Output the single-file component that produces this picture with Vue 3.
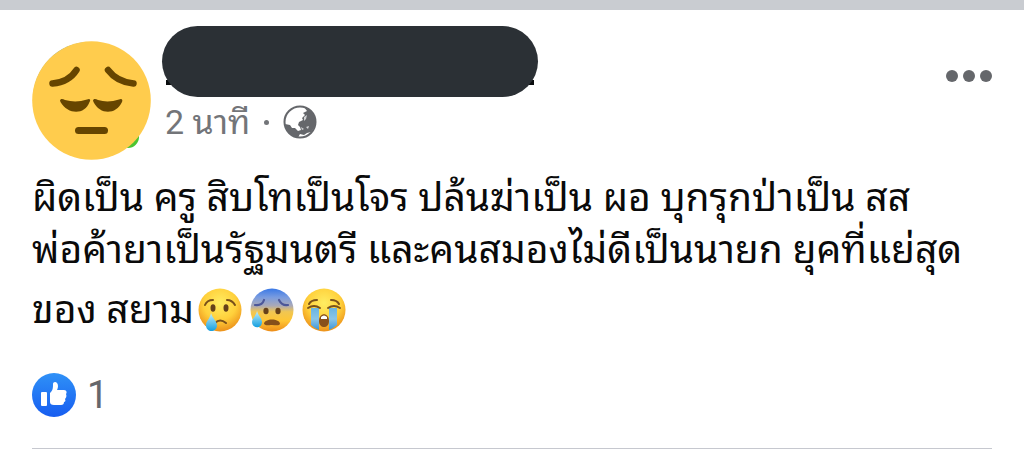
<script setup>
import { ref } from 'vue'

const lines = [
  'ผิดเป็น ครู สิบโทเป็นโจร ปล้นฆ่าเป็น ผอ บุกรุกป่าเป็น สส',
  'พ่อค้ายาเป็นรัฐมนตรี และคนสมองไม่ดีเป็นนายก ยุคที่แย่สุด',
]
const likes = ref(1)
</script>

<template>
  <article class="post">
    <header class="head">
      <svg class="avatar" viewBox="0 0 120 120" role="img" aria-label="Profile picture">
        <circle cx="58" cy="59" r="57" fill="#4f9dc4" />
        <circle cx="96" cy="97" r="11" fill="#4cc431" />
        <circle cx="59.500" cy="60.500" r="59.300" fill="#ffcc4d" />
        <g fill="none" stroke="#664500" stroke-width="6.500" stroke-linecap="round">
          <path d="M20.500 43.500Q37 42 44.500 30" />
          <path d="M76 30Q85 42 101.500 43.500" />
        </g>
        <path d="M28 60.500C29 58 31 59 33 60Q44 63 55 59.500C58 58 59 60 57.500 62C53 75 36 75 28.500 62Z" fill="#664500" />
        <path d="M61 60.500C62 58 64 59 66 60Q76 63 87 59.500C90 58 91 60 90 62C84 75 68 75 61.500 62Z" fill="#664500" />
        <rect x="43" y="87" width="33" height="7" rx="3.500" fill="#664500" />
      </svg>
      <div class="who">
        <div class="name"></div>
        <div class="meta">
          <span>2 นาที</span>
          <span class="dot"></span>
          <svg class="globe" viewBox="0 0 34 34" role="img" aria-label="Public">
            <circle cx="17" cy="17" r="15.500" fill="#fff" stroke="#65676b" stroke-width="2" />
            <path d="M21 2L24 6L20 8L22 10L19 13L20 15L16 17L15 20L17 22L18 25L15 26L12 23L9 23L7 20L2 19C3 27 9 32 15 32.500L17 29L21 30L24 28L28 27C36 19 33 5 21 2Z" fill="#65676b" />
            <path d="M21 12L24 10L23 14L21 16ZM23 22L26 21L25 24ZM18 22L21 24L19 25Z" fill="#d4d5d7" />
          </svg>
        </div>
      </div>
      <button class="more" type="button" aria-label="More options"><i></i><i></i><i></i></button>
    </header>

    <div class="body">
      <p v-for="line in lines" :key="line">{{ line }}</p>
      <p class="last">
        <span>ของ สยาม</span>
        <svg class="emoji" viewBox="0 0 44 44" role="img" aria-label="Crying face">
          <defs>
            <radialGradient id="skin" cx=".5" cy=".34" r=".7">
              <stop offset="0" stop-color="#ffed62" />
              <stop offset=".55" stop-color="#ffd03b" />
              <stop offset="1" stop-color="#e98816" />
            </radialGradient>
            <linearGradient id="tear" x2="0" y2="1">
              <stop offset="0" stop-color="#c3effa" />
              <stop offset="1" stop-color="#149fe0" />
            </linearGradient>
          </defs>
          <circle cx="22" cy="22" r="21.500" fill="url(#skin)" />
          <g fill="none" stroke="#79501a" stroke-width="2" stroke-linecap="round">
            <path d="M7 17Q9 12 15 12M29 12Q34 12 37 17" />
            <path d="M17 35Q22 30 28 35" />
          </g>
          <ellipse cx="15" cy="20" rx="2.500" ry="3.700" fill="#65411a" />
          <ellipse cx="28" cy="20" rx="2.500" ry="3.700" fill="#65411a" />
          <path d="M13 25C12 31 8 33 8 37C8 45 19 45 19 37C18 32 15 31 13 25Z" fill="url(#tear)" />
        </svg>
        <svg class="emoji" viewBox="0 0 44 44" role="img" aria-label="Anxious face with sweat">
          <defs>
            <linearGradient id="cold" x2="0" y2="1">
              <stop offset="0" stop-color="#3978e6" />
              <stop offset=".2" stop-color="#789be0" />
              <stop offset=".4" stop-color="#aaa9b7" />
              <stop offset=".54" stop-color="#f0c653" />
              <stop offset=".75" stop-color="#ffc634" />
              <stop offset="1" stop-color="#ed8c18" />
            </linearGradient>
          </defs>
          <circle cx="22" cy="22" r="21.500" fill="url(#cold)" />
          <path d="M5 17Q12 18 14 12M29 12Q32 18 38 17" fill="none" stroke="#4b5799" stroke-width="2.200" stroke-linecap="round" />
          <ellipse cx="16" cy="23" rx="2.600" ry="3.300" fill="#65411a" />
          <ellipse cx="28" cy="23" rx="2.600" ry="3.300" fill="#65411a" />
          <path d="M14 36C14 30 30 30 30 36C29 38 26 37 22 37S16 38 14 36Z" fill="#85501a" />
          <path d="M7 23C6 28 2 30 2 34C2 41 12 41 12 34C12 30 9 29 7 23Z" fill="url(#tear)" />
        </svg>
        <svg class="emoji" viewBox="0 0 44 44" role="img" aria-label="Loudly crying face">
          <defs>
            <linearGradient id="stream" x2="0" y2="1">
              <stop offset="0" stop-color="#69b4e2" />
              <stop offset=".5" stop-color="#8bc5e6" />
              <stop offset="1" stop-color="#3b95da" />
            </linearGradient>
          </defs>
          <circle cx="22" cy="22" r="21.500" fill="url(#skin)" />
          <path d="M9 20H17V42Q12 40 9 37ZM27 20H35V37Q32 40 27 42Z" fill="url(#stream)" />
          <g fill="none" stroke="#79501a" stroke-width="2" stroke-linecap="round">
            <path d="M7 16Q9 12 15 12M29 12Q35 12 37 16" />
            <path d="M6 20Q12 16 18 20M26 20Q32 16 38 20" />
          </g>
          <path d="M17 33C17 24 27 24 27 33C27 41 17 41 17 33Z" fill="#87501b" />
          <path d="M19 29Q22 26 25 29V31H19Z" fill="#fff" />
        </svg>
      </p>
    </div>

    <footer class="foot">
      <svg class="thumb" viewBox="0 0 44 44" role="img" aria-label="Likes">
        <defs>
          <linearGradient id="blue" x2="0" y2="1">
            <stop offset="0" stop-color="#2f91f7" />
            <stop offset="1" stop-color="#175df0" />
          </linearGradient>
        </defs>
        <circle cx="22" cy="22" r="22" fill="url(#blue)" />
        <rect x="9" y="19" width="6" height="14" rx="1" fill="#fff" />
        <path d="M18 20C21 17 21 15 21 11C21 8 26 8 26 13C26 15 25 17 25 17H32C35 17 35 20 34 21C35 23 34 25 33 26C34 28 33 29 32 29C32 31 31 32 29 32H22Q18 32 18 29Z" fill="#fff" />
      </svg>
      <span>{{ likes }}</span>
    </footer>
  </article>
</template>

<style>
body {
  margin: 0;
  background: #fff;
}
</style>

<style scoped>
.post {
  border-top: 10px solid #c9ccd1;
  padding: 16px 32px 0;
  font-family: Roboto, Thonburi, "Noto Sans Thai Looped", Loma, Garuda, Waree, "Noto Sans Thai", "Noto Sans", sans-serif;
  color: #0a0a0a;
}
.head {
  display: flex;
  align-items: flex-start;
}
.avatar {
  width: 120px;
  height: 120px;
  margin-top: 14px;
  flex: none;
}
.who {
  flex: 1;
  margin-left: 10px;
}
.name {
  position: relative;
  width: 48%;
  height: 71px;
  border-radius: 36px;
  background: #2b3035;
}
.name::before,
.name::after {
  content: "";
  position: absolute;
  bottom: 12px;
  width: 12px;
  height: 5px;
  background: #0b0d0f;
  z-index: -1;
}
.name::before {
  left: 4px;
}
.name::after {
  right: 4px;
}
.meta {
  display: flex;
  align-items: center;
  height: 50px;
  margin-left: 3px;
  font-size: 34px;
  line-height: 50px;
  color: #737579;
}
.dot {
  width: 5px;
  height: 5px;
  margin: 0 14px;
  border-radius: 50%;
  background: #737579;
}
.globe {
  width: 34px;
  height: 34px;
}
.more {
  display: flex;
  gap: 5px;
  margin-top: 44px;
  padding: 0;
  border: 0;
  background: none;
}
.more i {
  width: 12px;
  height: 12px;
  border-radius: 50%;
  background: #65676b;
}
.body {
  margin-top: 12px;
  font-size: 39px;
}
.body p {
  margin: 0;
  line-height: 52px;
  white-space: nowrap;
}
.body .last {
  display: flex;
  align-items: center;
  gap: 8px;
  line-height: 68px;
}
.last span {
  margin-right: -4px;
}
.emoji {
  width: 44px;
  height: 44px;
}
.foot {
  display: flex;
  align-items: center;
  gap: 11px;
  margin-top: 29px;
  padding-bottom: 31px;
  border-bottom: 1px solid #c6c8cf;
  font-size: 38px;
  line-height: 44px;
  color: #65676b;
}
.thumb {
  width: 44px;
  height: 44px;
}
</style>
